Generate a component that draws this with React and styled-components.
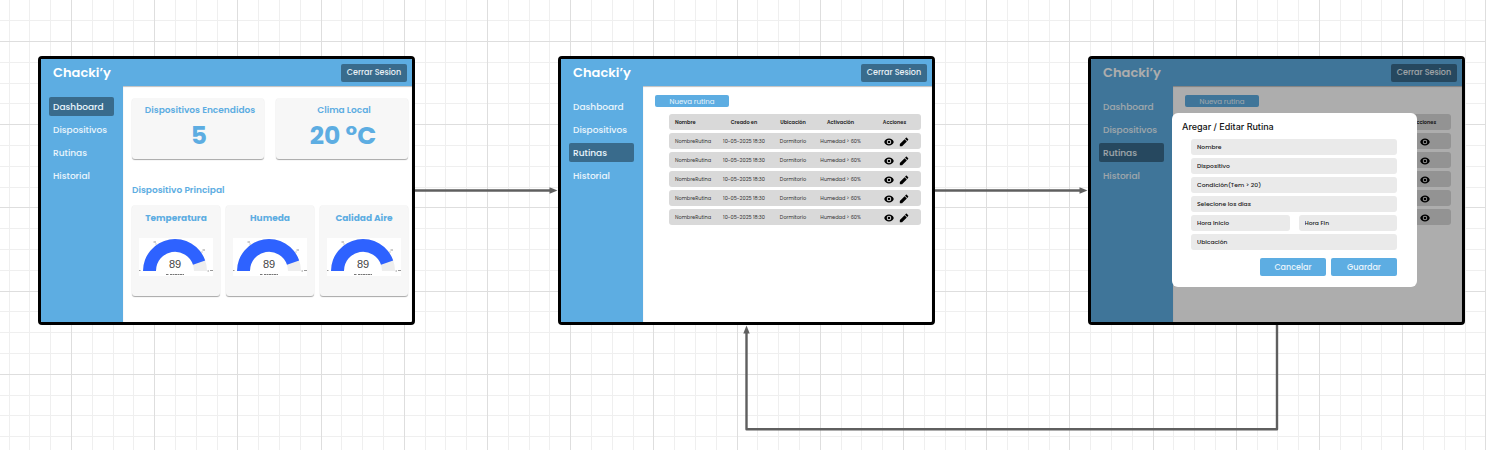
import React from "react";
import styled, { createGlobalStyle, css } from "styled-components";

const BLUE = "#5dade2";
const NAVY = "#396b8c";
const LINE = "#5f5f5f";

const GlobalStyle = createGlobalStyle`
  *, *::before, *::after { box-sizing: border-box; }
  body {
    margin: 0;
    background: #fff;
    font-family: Poppins, Inter, "Liberation Sans", sans-serif;
  }
  button, input { font-family: inherit; }
`;

const Canvas = styled.main`
  position: relative;
  width: 100%;
  min-height: 100vh;
  overflow: hidden;
`;

const Layer = styled.svg`
  position: absolute;
  inset: 0;
  width: 100%;
  height: 100%;
`;

const Frame = styled.section`
  position: absolute;
  left: ${(p) => p.$x}px;
  top: ${(p) => p.$y}px;
  width: 377px;
  height: 269px;
  display: flex;
  flex-direction: column;
  border: 3px solid #000;
  border-radius: 4px;
  background: #fff;
  overflow: hidden;
`;

const TopBar = styled.header`
  display: flex;
  align-items: center;
  justify-content: space-between;
  flex: none;
  height: 27px;
  padding: 0 5px 0 12px;
  background: ${BLUE};
`;

const Brand = styled.h1`
  margin: 0;
  color: #fff;
  font-size: 13px;
  line-height: 18px;
  font-weight: 600;
`;

const LogoutButton = styled.button`
  width: 66px;
  height: 18px;
  padding: 0;
  border: 0;
  border-radius: 2px;
  background: ${NAVY};
  color: #e9f1f6;
  font-size: 8px;
  line-height: 18px;
  font-weight: 500;
  white-space: nowrap;
`;

const Body = styled.div`
  flex: 1;
  display: flex;
  min-height: 0;
`;

const Sidebar = styled.nav`
  flex: none;
  width: 82px;
  padding: 11px 9px 0 8px;
  display: flex;
  flex-direction: column;
  gap: 4px;
  background: ${BLUE};
`;

const NavLink = styled.a`
  display: block;
  padding: 1px 0 0 4px;
  border-radius: 2px;
  color: #eaf5fc;
  font-size: 9px;
  line-height: 18px;
  font-weight: 500;
  text-decoration: none;
  ${(p) => p.$active && css`background: ${NAVY};`}
`;

const Content = styled.div`
  flex: 1;
  min-width: 0;
  padding: ${(p) => p.$pad};
  box-shadow: inset 0 1px 1px rgba(0, 0, 0, 0.25);
`;

const CardRow = styled.div`
  display: grid;
  grid-template-columns: repeat(${(p) => p.$columns}, 1fr);
  gap: ${(p) => p.$gap}px;
`;

const Card = styled.article`
  display: flex;
  flex-direction: column;
  align-items: center;
  height: ${(p) => p.$height}px;
  border-radius: 3px;
  background: #f7f7f7;
  box-shadow: 0 1px 1px rgba(0, 0, 0, 0.35);
`;

const StatLabel = styled.h2`
  margin: 5px 0 0;
  padding-left: 4px;
  color: ${BLUE};
  font-size: 9px;
  line-height: 14px;
  font-weight: 600;
  white-space: nowrap;
`;

const StatValue = styled.p`
  margin: 4px 0 0;
  padding-left: 2px;
  color: ${BLUE};
  font-size: 25px;
  line-height: 30px;
  font-weight: 700;
`;

const SectionTitle = styled.h2`
  margin: 24px 0 8px;
  color: ${BLUE};
  font-size: 9px;
  line-height: 14px;
  font-weight: 600;
`;

const GaugeTitle = styled.h3`
  margin: 6px 0 13px;
  color: ${BLUE};
  font-size: 9px;
  line-height: 14px;
  font-weight: 700;
  white-space: nowrap;
`;

const PrimaryButton = styled.button`
  display: block;
  width: ${(p) => p.$width}px;
  height: ${(p) => p.$height}px;
  padding: 1px 0 0;
  border: 0;
  border-radius: 2px;
  background: ${BLUE};
  color: #eaf5fc;
  font-size: ${(p) => p.$size}px;
  line-height: ${(p) => p.$height - 1}px;
  font-weight: ${(p) => p.$weight || 500};
`;

const Table = styled.table`
  width: 252px;
  margin: 4px 0 0 14px;
  table-layout: fixed;
  border-collapse: separate;
  border-spacing: 0 3px;
  color: #333;
  font-size: 5px;
  line-height: 8px;
  white-space: nowrap;
`;

const Cell = styled.td`
  height: 16px;
  padding: 1px 0 0;
  background: #d9d9d9;
  text-align: center;
  vertical-align: middle;
  &:first-child { padding-left: 6px; text-align: left; border-radius: 3px 0 0 3px; }
  &:last-child { border-radius: 0 3px 3px 0; }
`;

const HeadCell = styled(Cell)`
  width: ${(p) => p.$width}px;
  color: #222;
  font-weight: 600;
`;

const Actions = styled.div`
  display: flex;
  align-items: center;
  justify-content: center;
  gap: 5px;
  padding-left: ${(p) => (p.$pair ? 4 : 0)}px;
`;

const IconButton = styled.button`
  display: flex;
  padding: 0;
  border: 0;
  background: none;
  color: #000;
`;

const Backdrop = styled.div`
  position: absolute;
  inset: 0;
  background: rgba(0, 0, 0, 0.32);
`;

const Dialog = styled.form`
  position: absolute;
  left: 81px;
  top: 54px;
  width: 245px;
  padding: 7px 20px 11px 19px;
  border-radius: 6px;
  background: #fff;
`;

const DialogTitle = styled.h2`
  margin: 0 0 5px -9px;
  color: #111;
  font-family: Inter, sans-serif;
  font-size: 9px;
  line-height: 14px;
  font-weight: 500;
`;

const Fields = styled.div`
  display: grid;
  grid-template-columns: 1fr 1fr;
  gap: 3px 9px;
`;

const Field = styled.input`
  grid-column: ${(p) => (p.$half ? "auto" : "1 / -1")};
  width: 100%;
  min-width: 0;
  height: 16px;
  padding: 0 6px;
  border: 0;
  border-radius: 3px;
  background: #eaeaea;
  color: #222;
  font-size: 6px;
  font-weight: 500;
  &::placeholder { color: #222; opacity: 1; }
`;

const DialogActions = styled.div`
  display: flex;
  justify-content: flex-end;
  gap: 5px;
  margin-top: 8px;
`;

const GridLayer = () => {
  const steps = Array.from({ length: 20 }, (_, i) => i);
  const at = (i) => Math.round(i * 20.8);
  const lines = (major) =>
    steps
      .filter((i) => (i % 4 === 0) === major)
      .map((i) => `M${at(i)} 0h1v416h-1zM0 ${at(i)}h416v1h-416z`)
      .join("");
  return (
    <Layer aria-hidden="true">
      <defs>
        <pattern id="grid" x="71" y="41" width="416" height="416" patternUnits="userSpaceOnUse">
          <path d={lines(false)} fill="#efefef" />
          <path d={lines(true)} fill="#dedede" />
        </pattern>
      </defs>
      <rect width="100%" height="100%" fill="url(#grid)" />
    </Layer>
  );
};

const Connectors = () => (
  <Layer aria-hidden="true">
    <g fill="none" stroke={LINE} strokeWidth="2.4">
      <path d="M415 190.5H550" />
      <path d="M935 190.5H1080" />
      <path d="M1277 325V429.2H746.5V333" strokeLinejoin="round" />
    </g>
    <g fill={LINE}>
      <path d="M557.5 190.5l-8-3.2v6.4z" />
      <path d="M1087.5 190.5l-8-3.2v6.4z" />
      <path d="M746.5 325.5l-3.2 8h6.4z" />
    </g>
  </Layer>
);

const Gauge = ({ value }) => (
  <svg width="74" height="38" viewBox="0 0 74 38" role="img" aria-label={String(value)}>
    <rect width="74" height="38" fill="#fff" />
    <path d="M4 33a32 32 0 0 1 64 0h-13a19 19 0 0 0-38 0z" fill="#eee" />
    <path d="M4 33A32 32 0 0 1 66.2 22.5L54 26.7A19 19 0 0 0 17 33z" fill="#2e62ff" />
    <path d="M0 32.5h1.5M14.5 4h2.5M17 5.5v1M63.5 12h2.5M63 13.5v1M68.5 33h1.5M71 32.5h3" stroke="#999" fill="none" />
    <text x="36" y="30" textAnchor="middle" fontFamily="Liberation Sans, sans-serif" fontSize="11" fill="#444">
      {value}
    </text>
    <path d="M27 36.5h3M31 36.5h14" stroke="#777" strokeDasharray="2 0.5" fill="none" />
  </svg>
);

const EyeIcon = () => (
  <svg width="10" height="10" viewBox="0 0 24 24" fill="currentColor" aria-hidden="true">
    <path d="M12 3.5C6.5 3.5 2 7 .5 12c1.5 5 6 8.5 11.5 8.5S22 17 23.500 12C22 7 17.500 3.500 12 3.500zm0 14a5.500 5.500 0 1 1 0-11 5.500 5.500 0 0 1 0 11zm0-2.300a3.200 3.200 0 1 0 0-6.400 3.200 3.200 0 0 0 0 6.400z" />
  </svg>
);

const PencilIcon = () => (
  <svg width="10" height="10" viewBox="0 0 24 24" fill="currentColor" aria-hidden="true">
    <path d="M2 16.700v5.300h5.300L18.800 10.500 13.500 5.200zM22 7.300a1.500 1.500 0 0 0 0-2.100L18.800 2a1.500 1.500 0 0 0-2.100 0l-2.200 2.200 5.300 5.300z" />
  </svg>
);

const NAV = ["Dashboard", "Dispositivos", "Rutinas", "Historial"];

const Screen = ({ x, y, active, pad, children, overlay }) => (
  <Frame $x={x} $y={y}>
    <TopBar>
      <Brand>Chacki’y</Brand>
      <LogoutButton type="button">Cerrar Sesion</LogoutButton>
    </TopBar>
    <Body>
      <Sidebar>
        {NAV.map((item) => (
          <NavLink key={item} href="#" $active={item === active}>
            {item}
          </NavLink>
        ))}
      </Sidebar>
      <Content $pad={pad}>{children}</Content>
    </Body>
    {overlay}
  </Frame>
);

const Dashboard = () => (
  <>
    <CardRow $columns={2} $gap={12}>
      <Card $height={61}>
        <StatLabel>Dispositivos Encendidos</StatLabel>
        <StatValue>5</StatValue>
      </Card>
      <Card $height={61}>
        <StatLabel>Clima Local</StatLabel>
        <StatValue>20 °C</StatValue>
      </Card>
    </CardRow>
    <SectionTitle>Dispositivo Principal</SectionTitle>
    <CardRow $columns={3} $gap={6}>
      {["Temperatura", "Humeda", "Calidad Aire"].map((name) => (
        <Card key={name} $height={91}>
          <GaugeTitle>{name}</GaugeTitle>
          <Gauge value={89} />
        </Card>
      ))}
    </CardRow>
  </>
);

const COLUMNS = [
  ["Nombre", 46],
  ["Creado en", 58],
  ["Ubicación", 40],
  ["Activación", 55],
  ["Acciones", 53],
];

const ROUTINE = ["NombreRutina", "10-05-2025 18:30", "Dormitorio", "Humedad > 60%"];

/* behindDialog leaves out the texts that the open dialog covers */
const Routines = ({ behindDialog = false }) => (
  <>
    <PrimaryButton type="button" $width={74} $height={12} $size={7} $weight={400}>
      Nueva rutina
    </PrimaryButton>
    <Table>
      <thead>
        <tr>
          {COLUMNS.map(([label, width], i) => (
            <HeadCell as="th" key={label} $width={width}>
              {behindDialog && i < 4 ? null : label}
            </HeadCell>
          ))}
        </tr>
      </thead>
      <tbody>
        {[1, 2, 3, 4, 5].map((id) => (
          <tr key={id}>
            {ROUTINE.map((text) => (
              <Cell key={text}>{behindDialog ? null : text}</Cell>
            ))}
            <Cell>
              <Actions $pair={!behindDialog}>
                <IconButton type="button" aria-label="Ver">
                  <EyeIcon />
                </IconButton>
                {!behindDialog && (
                  <IconButton type="button" aria-label="Editar">
                    <PencilIcon />
                  </IconButton>
                )}
              </Actions>
            </Cell>
          </tr>
        ))}
      </tbody>
    </Table>
  </>
);

const FIELDS = [
  ["Nombre"],
  ["Dispositivo"],
  ["Condición(Tem > 20)"],
  ["Selecione los días"],
  ["Hora Inicio", true],
  ["Hora Fin", true],
  ["Ubicación"],
];

const RoutineDialog = () => (
  <Backdrop>
    <Dialog>
      <DialogTitle>Aregar / Editar Rutina</DialogTitle>
      <Fields>
        {FIELDS.map(([label, half]) => (
          <Field key={label} type="text" placeholder={label} aria-label={label} $half={half} />
        ))}
      </Fields>
      <DialogActions>
        <PrimaryButton type="button" $width={66} $height={18} $size={8}>
          Cancelar
        </PrimaryButton>
        <PrimaryButton type="button" $width={66} $height={18} $size={8}>
          Guardar
        </PrimaryButton>
      </DialogActions>
    </Dialog>
  </Backdrop>
);

export default function App() {
  return (
    <>
      <GlobalStyle />
      <Canvas>
        <GridLayer />
        <Screen x={38} y={56} active="Dashboard" pad="12px 4px 0 9px">
          <Dashboard />
        </Screen>
        <Screen x={558} y={56} active="Rutinas" pad="9px 13px 0 12px">
          <Routines />
        </Screen>
        <Screen x={1088} y={56} active="Rutinas" pad="9px 13px 0 12px" overlay={<RoutineDialog />}>
          <Routines behindDialog />
        </Screen>
        <Connectors />
      </Canvas>
    </>
  );
}
